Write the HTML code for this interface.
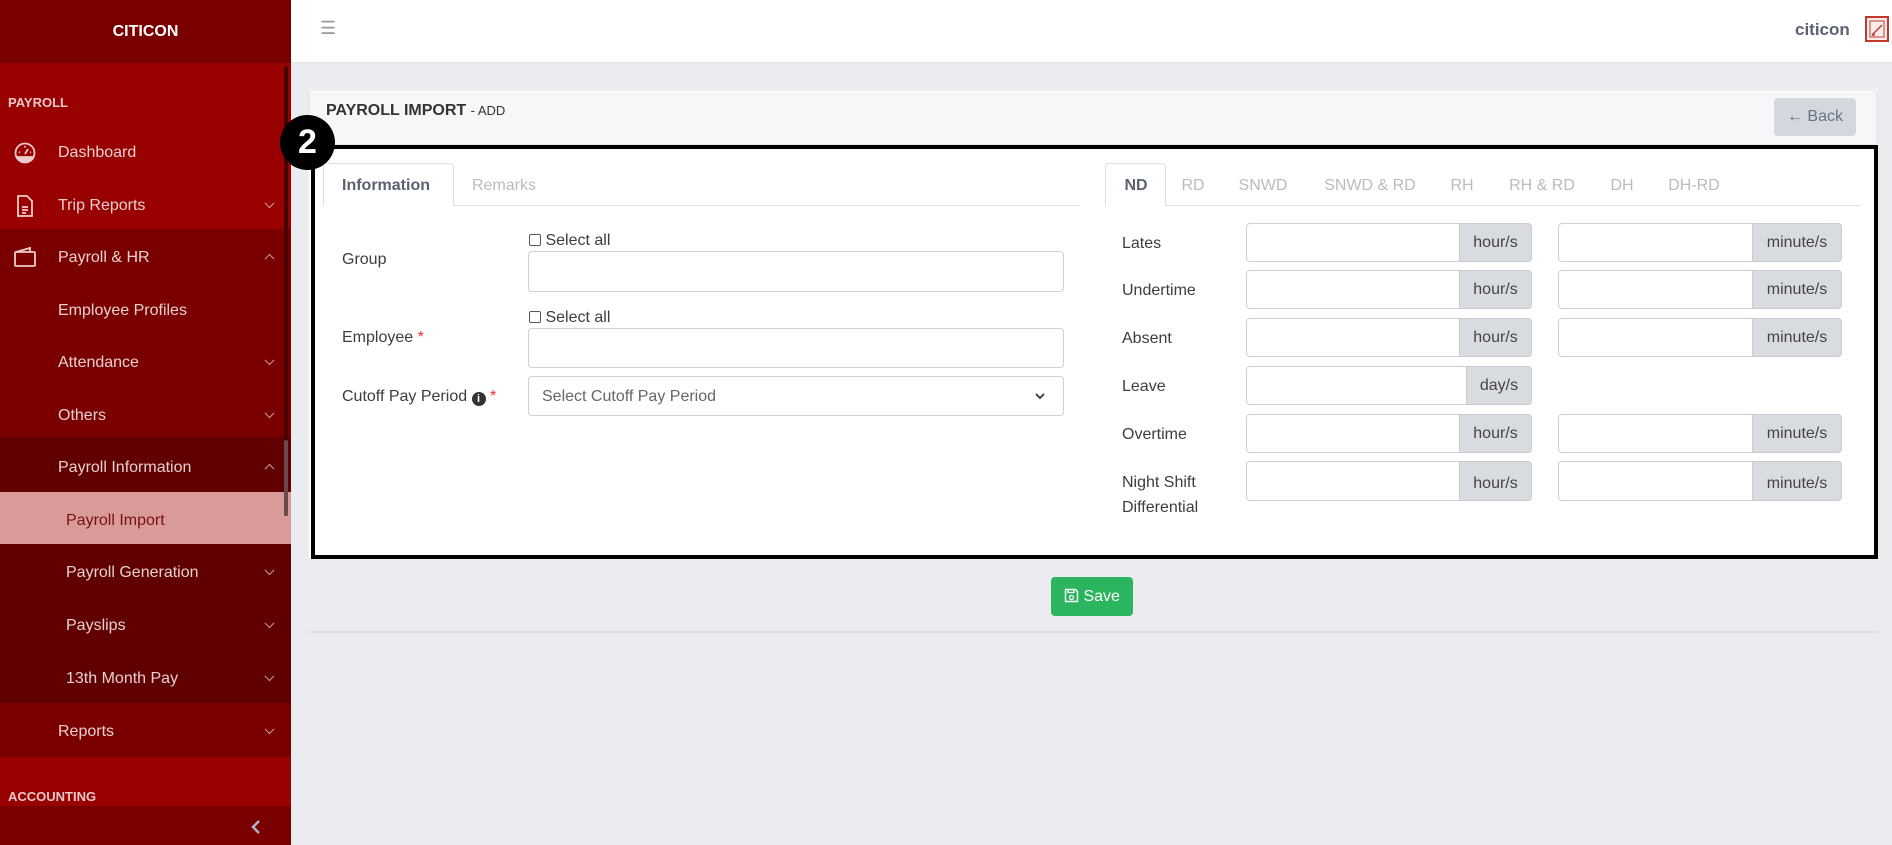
<!DOCTYPE html>
<html><head><meta charset="utf-8"><style>
*{box-sizing:border-box;margin:0;padding:0}
body{width:1892px;height:845px;overflow:hidden;background:#ebecef;font-family:"Liberation Sans",sans-serif;position:relative;color:#444}
.a{position:absolute}
.sb{left:0;top:0;width:291px;height:845px}
.si{position:absolute;left:0;width:291px;color:#e8d0d0;font-size:16px}
.si span{position:absolute;top:50%;transform:translateY(-45%)}
.chev{position:absolute;right:18px;top:50%;width:7px;height:7px;border-right:1px solid #c99;border-bottom:1px solid #c99;transform:translateY(-75%) rotate(45deg)}
.up{transform:translateY(-25%) rotate(225deg)}
.lbl{position:absolute;font-size:16px;color:#3d3d3d}
.inp{position:absolute;background:#fff;border:1px solid #ccd0d5;border-radius:4px}
.add{position:absolute;background:#d8dbe0;border:1px solid #c8ccd2;border-radius:0 4px 4px 0;font-size:16px;color:#444;display:flex;align-items:center;justify-content:center}
.tab{position:absolute;font-size:16px;color:#b8bcc2;transform:translateX(-50%)}
</style></head><body>
<div class="a sb" style="background:#7a0000"></div>
<div class="a" style="left:0;top:0;width:291px;height:63px;background:#7a0000;color:#fff;font-weight:bold;font-size:16px;text-align:center;line-height:63px">CITICON</div>
<div class="a" style="left:0;top:63px;width:291px;height:166px;background:#990000"></div>
<div class="a" style="left:0;top:229px;width:291px;height:208px;background:#7a0000"></div>
<div class="a" style="left:0;top:437px;width:291px;height:266px;background:#600000"></div>
<div class="a" style="left:0;top:492px;width:291px;height:52px;background:#d99a9a"></div>
<div class="a" style="left:0;top:703px;width:291px;height:54px;background:#7a0000"></div>
<div class="a" style="left:0;top:757px;width:291px;height:49px;background:#990000"></div>
<div class="a" style="left:0;top:806px;width:291px;height:39px;background:#7a0000"></div>
<div class="a" style="left:284px;top:66px;width:4px;height:450px;background:#4a0000;border-radius:2px"></div>
<div class="a" style="left:284px;top:440px;width:4px;height:76px;background:#6a4a4a;border-radius:2px"></div>
<div class="a" style="left:8px;top:95px;font-size:13px;font-weight:bold;color:#e8c8c8">PAYROLL</div>
<div class="a" style="left:8px;top:789px;font-size:13px;font-weight:bold;color:#e8c8c8">ACCOUNTING</div>
<svg class="a" style="left:13px;top:141px" width="24" height="24" viewBox="0 0 24 24" fill="none" stroke="#eecccc" stroke-width="1.8"><circle cx="12" cy="12" r="9.5"/><path d="M12 13l3-5M6 11l1 .5M18 11l-1 .5M12 5v1.5"/><path d="M4 16a9 9 0 0 0 16 0z" fill="#eecccc"/></svg>
<svg class="a" style="left:15px;top:194px" width="20" height="24" viewBox="0 0 20 24" fill="none" stroke="#eecccc" stroke-width="1.8"><path d="M3 2h9l5 5v15H3z"/><path d="M7 13h6M7 16h6M7 19h4"/></svg>
<svg class="a" style="left:13px;top:246px" width="24" height="22" viewBox="0 0 24 22" fill="none" stroke="#eecccc" stroke-width="1.8"><rect x="2" y="6" width="20" height="14" rx="1"/><path d="M3 6l14-4v4"/></svg>
<div class="si" style="top:130px;height:44px"><span style="left:58px">Dashboard</span></div>
<div class="si" style="top:183px;height:44px"><span style="left:58px">Trip Reports</span><i class="chev"></i></div>
<div class="si" style="top:235px;height:44px"><span style="left:58px">Payroll &amp; HR</span><i class="chev up"></i></div>
<div class="si" style="top:288px;height:44px"><span style="left:58px">Employee Profiles</span></div>
<div class="si" style="top:340px;height:44px"><span style="left:58px">Attendance</span><i class="chev"></i></div>
<div class="si" style="top:393px;height:44px"><span style="left:58px">Others</span><i class="chev"></i></div>
<div class="si" style="top:445px;height:44px"><span style="left:58px">Payroll Information</span><i class="chev up"></i></div>
<div class="si" style="top:498px;height:44px;color:#7a1010"><span style="left:66px">Payroll Import</span></div>
<div class="si" style="top:550px;height:44px"><span style="left:66px">Payroll Generation</span><i class="chev"></i></div>
<div class="si" style="top:603px;height:44px"><span style="left:66px">Payslips</span><i class="chev"></i></div>
<div class="si" style="top:656px;height:44px"><span style="left:66px">13th Month Pay</span><i class="chev"></i></div>
<div class="si" style="top:709px;height:44px"><span style="left:58px">Reports</span><i class="chev"></i></div>
<svg class="a" style="left:250px;top:819px" width="12" height="16" viewBox="0 0 12 16"><path d="M9 2L3 8l6 6" fill="none" stroke="#aab4c8" stroke-width="2.5"/></svg>
<div class="a" style="left:291px;top:0;width:1601px;height:63px;background:#fff;border-bottom:1px solid #e2e4e8"></div>
<div class="a" style="left:320px;top:18px;font-size:18px;color:#999">&#9776;</div>
<div class="a" style="left:1795px;top:20px;font-size:17px;font-weight:bold;color:#5a6170">citicon</div>
<div class="a" style="left:1865px;top:16px;width:24px;height:26px;border:2px solid #c0392b;background:#fbeaea"><svg width="20" height="22" viewBox="0 0 20 22" style="position:absolute;left:0;top:0"><path d="M3 3h14v16H3z" fill="none" stroke="#c0392b" stroke-width="1"/><path d="M5 17L15 7M5 17h3" fill="none" stroke="#c0392b" stroke-width="1.5"/></svg></div>
<div class="a" style="left:309px;top:89px;width:1568px;height:470px;background:#fff"></div>
<div class="a" style="left:309px;top:89px;width:1568px;height:56px;background:#f6f7f8;border-radius:4px 4px 0 0;border:1px solid #e7e8ea"></div>
<div class="a" style="left:326px;top:102px;font-size:16px;color:#333"><b>PAYROLL IMPORT</b> <span style="font-size:13px">- ADD</span></div>
<div class="a" style="left:1774px;top:98px;width:82px;height:38px;background:#d3d7de;border-radius:4px;font-size:16px;color:#6b7280;line-height:38px;text-align:center">&larr; Back</div>
<div class="a" style="left:309px;top:631px;width:1568px;height:2px;background:#dcdee2"></div>
<div class="a" style="left:311px;top:145px;width:1567px;height:414px;border:4px solid #000;background:#fff"></div>
<div class="a" style="left:280px;top:115px;width:55px;height:55px;border-radius:50%;background:#000;color:#fff;font-weight:bold;font-size:34px;text-align:center;line-height:55px">2</div>
<div class="a" style="left:323px;top:205px;width:757px;height:1px;background:#dde0e4"></div>
<div class="a" style="left:323px;top:163px;width:131px;height:43px;background:#fff;border:1px solid #dde0e4;border-bottom:none;border-radius:4px 4px 0 0"></div>
<div class="a" style="left:342px;top:177px;font-size:16px;font-weight:bold;color:#5a6270">Information</div>
<div class="a" style="left:472px;top:177px;font-size:16px;color:#b8bcc2">Remarks</div>
<div class="lbl" style="left:342px;top:251px">Group</div>
<div class="lbl" style="left:342px;top:329px">Employee <span style="color:#e33">*</span></div>
<div class="lbl" style="left:342px;top:388px">Cutoff Pay Period <span style="display:inline-block;width:14px;height:14px;border-radius:50%;background:#333;color:#fff;font-size:11px;text-align:center;line-height:14px;font-weight:bold;vertical-align:-1px">i</span> <span style="color:#e33">*</span></div>
<div class="lbl" style="left:529px;top:232px"><span style="display:inline-block;width:12px;height:12px;border:1px solid #555;border-radius:2px;vertical-align:-1px"></span> Select all</div>
<div class="lbl" style="left:529px;top:309px"><span style="display:inline-block;width:12px;height:12px;border:1px solid #555;border-radius:2px;vertical-align:-1px"></span> Select all</div>
<div class="inp" style="left:528px;top:251px;width:536px;height:41px"></div>
<div class="inp" style="left:528px;top:328px;width:536px;height:40px"></div>
<div class="inp" style="left:528px;top:376px;width:536px;height:40px"></div>
<div class="a" style="left:542px;top:388px;font-size:16px;color:#666">Select Cutoff Pay Period</div>
<svg class="a" style="left:1034px;top:391px" width="12" height="10" viewBox="0 0 12 10"><path d="M2 3l4 4 4-4" fill="none" stroke="#333" stroke-width="1.8"/></svg>
<div class="a" style="left:1105px;top:205px;width:756px;height:1px;background:#dde0e4"></div>
<div class="a" style="left:1105px;top:163px;width:61px;height:43px;background:#fff;border:1px solid #dde0e4;border-bottom:none;border-radius:4px 4px 0 0"></div>
<div class="tab" style="left:1136px;top:177px;font-weight:bold;color:#5a6270">ND</div>
<div class="tab" style="left:1193px;top:177px">RD</div>
<div class="tab" style="left:1263px;top:177px">SNWD</div>
<div class="tab" style="left:1370px;top:177px">SNWD &amp; RD</div>
<div class="tab" style="left:1462px;top:177px">RH</div>
<div class="tab" style="left:1542px;top:177px">RH &amp; RD</div>
<div class="tab" style="left:1622px;top:177px">DH</div>
<div class="tab" style="left:1694px;top:177px">DH-RD</div>
<div class="lbl" style="left:1122px;top:235px">Lates</div>
<div class="lbl" style="left:1122px;top:282px">Undertime</div>
<div class="lbl" style="left:1122px;top:330px">Absent</div>
<div class="lbl" style="left:1122px;top:378px">Leave</div>
<div class="lbl" style="left:1122px;top:426px">Overtime</div>
<div class="lbl" style="left:1122px;top:470px;line-height:25px">Night Shift<br>Differential</div>
<div class="inp" style="left:1246px;top:223px;width:216px;height:39px;border-radius:4px 0 0 4px"></div><div class="add" style="left:1459px;top:223px;width:73px;height:39px">hour/s</div>
<div class="inp" style="left:1558px;top:223px;width:196px;height:39px;border-radius:4px 0 0 4px"></div><div class="add" style="left:1752px;top:223px;width:90px;height:39px">minute/s</div>
<div class="inp" style="left:1246px;top:270px;width:216px;height:39px;border-radius:4px 0 0 4px"></div><div class="add" style="left:1459px;top:270px;width:73px;height:39px">hour/s</div>
<div class="inp" style="left:1558px;top:270px;width:196px;height:39px;border-radius:4px 0 0 4px"></div><div class="add" style="left:1752px;top:270px;width:90px;height:39px">minute/s</div>
<div class="inp" style="left:1246px;top:318px;width:216px;height:39px;border-radius:4px 0 0 4px"></div><div class="add" style="left:1459px;top:318px;width:73px;height:39px">hour/s</div>
<div class="inp" style="left:1558px;top:318px;width:196px;height:39px;border-radius:4px 0 0 4px"></div><div class="add" style="left:1752px;top:318px;width:90px;height:39px">minute/s</div>
<div class="inp" style="left:1246px;top:366px;width:222px;height:39px;border-radius:4px 0 0 4px"></div><div class="add" style="left:1466px;top:366px;width:66px;height:39px">day/s</div>
<div class="inp" style="left:1246px;top:414px;width:216px;height:39px;border-radius:4px 0 0 4px"></div><div class="add" style="left:1459px;top:414px;width:73px;height:39px">hour/s</div>
<div class="inp" style="left:1558px;top:414px;width:196px;height:39px;border-radius:4px 0 0 4px"></div><div class="add" style="left:1752px;top:414px;width:90px;height:39px">minute/s</div>
<div class="inp" style="left:1246px;top:461px;width:216px;height:40px;border-radius:4px 0 0 4px"></div><div class="add" style="left:1459px;top:461px;width:73px;height:40px;padding-top:6px">hour/s</div>
<div class="inp" style="left:1558px;top:461px;width:196px;height:40px;border-radius:4px 0 0 4px"></div><div class="add" style="left:1752px;top:461px;width:90px;height:40px;padding-top:6px">minute/s</div>
<div class="a" style="left:1051px;top:577px;width:82px;height:39px;background:#2ab55e;border-radius:4px;color:#fff;font-size:16px;line-height:39px;text-align:center"><svg width="15" height="15" viewBox="0 0 15 15" style="vertical-align:-2px"><path d="M1.5 1.5h10l2 2v10h-12z" fill="none" stroke="#fff" stroke-width="1.4"/><path d="M4 1.5v3h6v-3" fill="none" stroke="#fff" stroke-width="1.2"/><circle cx="7.5" cy="9.5" r="2" fill="none" stroke="#fff" stroke-width="1.2"/></svg> Save</div>
</body></html>
